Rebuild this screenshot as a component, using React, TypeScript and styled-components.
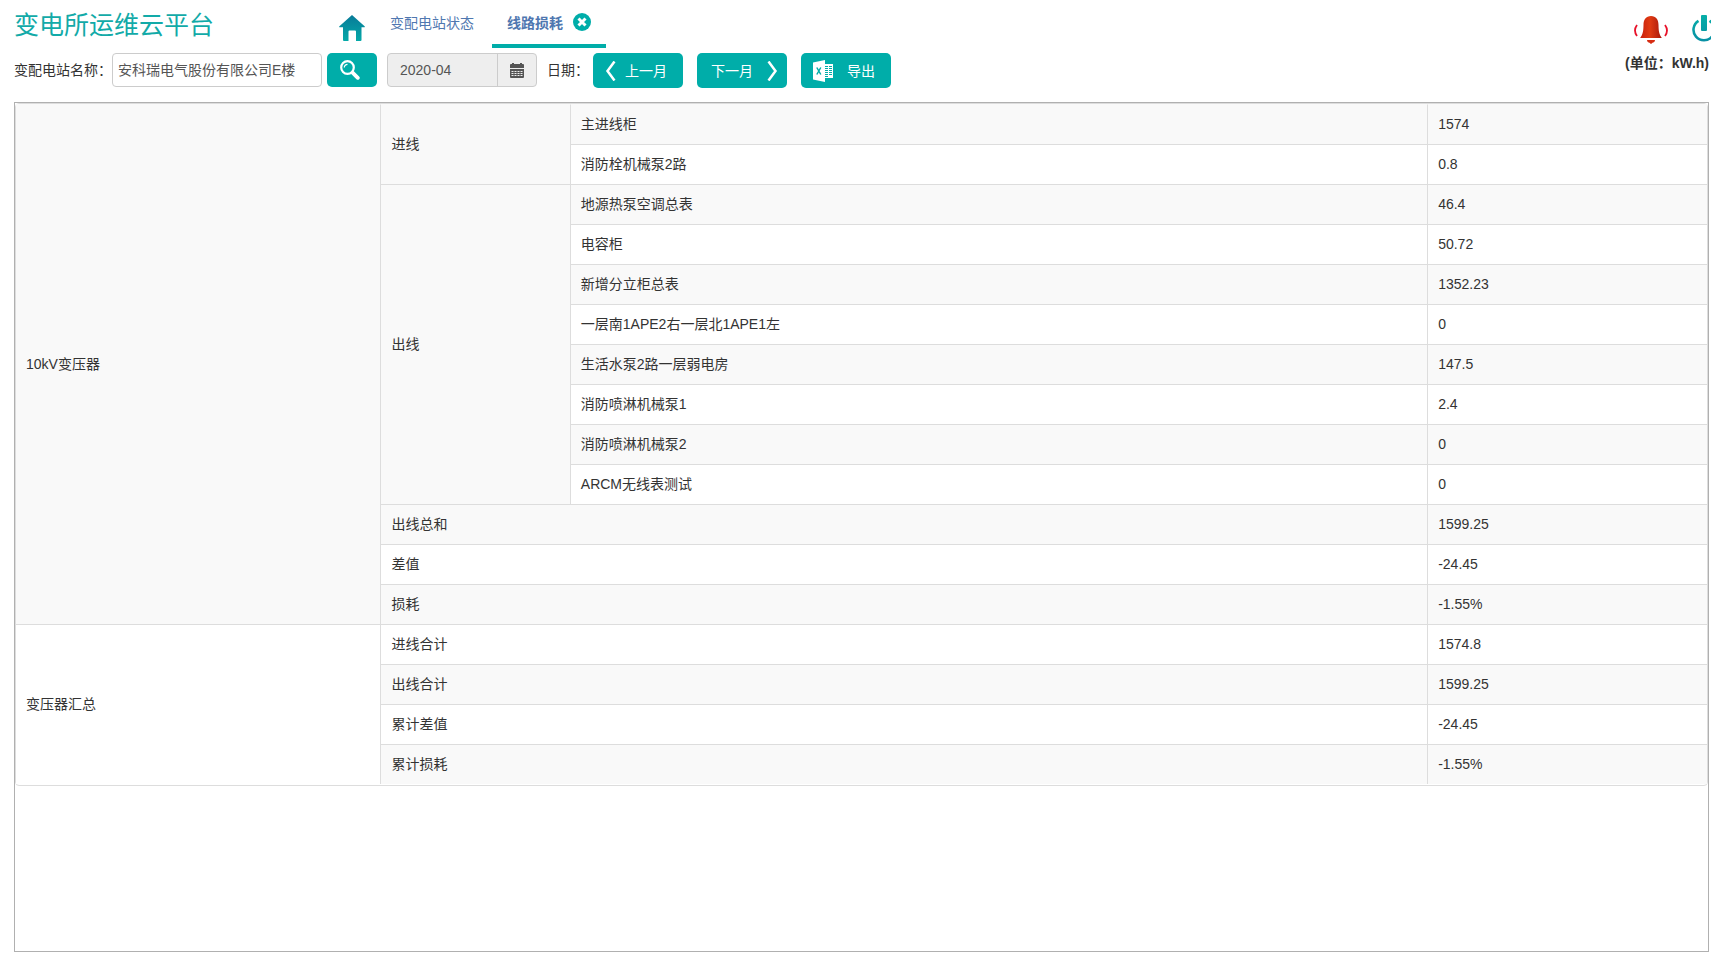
import React from "react";
import styled, { createGlobalStyle } from "styled-components";

const teal = "#00ada9";

const GlobalStyle = createGlobalStyle`
  *, *::before, *::after { box-sizing: border-box; }
  html, body, #root { height: 100%; }
  body {
    margin: 0;
    overflow: hidden;
    background: #fff;
    color: #333;
    font: 14px/20px "Liberation Sans", "Noto Sans CJK SC", sans-serif;
  }
  button, input { font: inherit; color: inherit; }
`;

const Page = styled.div`
  display: flex;
  flex-direction: column;
  height: 100vh;
  padding: 0 2px 2px 14px;
`;

const Header = styled.header`
  display: flex;
  height: 48px;
  flex: none;
`;

const Title = styled.h1`
  width: 325px;
  margin: 0;
  padding-top: 6px;
  color: #12aaa8;
  font-size: 25px;
  font-weight: 400;
  line-height: 38px;
`;

const HomeLink = styled.a`
  display: block;
  width: 36px;
  padding-top: 15px;
  svg { display: block; }
`;

const Tabs = styled.nav`
  display: flex;
  flex: 1;
`;

const Tab = styled.div<{ $active?: boolean }>`
  display: flex;
  align-items: flex-start;
  gap: 10px;
  padding: 13px 15px 0;
  height: 48px;
  font-weight: ${(p) => (p.$active ? 700 : 400)};
  border-bottom: 4px solid ${(p) => (p.$active ? teal : "transparent")};
  margin-right: 3px;
`;

const TabLink = styled.a`
  color: #4f77b0;
  text-decoration: none;
`;

const IconButton = styled.button`
  display: block;
  flex: none;
  padding: 0;
  border: 0;
  background: none;
  line-height: 0;
  cursor: pointer;
`;

const Actions = styled.div`
  display: flex;
  align-items: flex-start;
  gap: 22px;
  padding-top: 14px;
  margin-right: -8px;
`;

const Toolbar = styled.form`
  display: flex;
  flex: none;
  height: 54px;
  padding-top: 5px;
  align-items: flex-start;
`;

const Label = styled.label<{ $width: number }>`
  width: ${(p) => p.$width}px;
  line-height: 34px;
  white-space: nowrap;
`;

const StationInput = styled.input`
  width: 210px;
  height: 34px;
  padding: 0 5px 2px;
  color: #555;
  border: 1px solid #ccc;
  border-radius: 4px;
`;

const Button = styled.button<{ $width: number; $gap?: number; $pad?: number }>`
  display: flex;
  align-items: center;
  gap: ${(p) => p.$gap ?? 0}px;
  width: ${(p) => p.$width}px;
  height: 35px;
  padding: 0 0 0 ${(p) => p.$pad ?? 12}px;
  color: #fff;
  white-space: nowrap;
  background: ${teal};
  border: 0;
  border-radius: 5px;
  cursor: pointer;
  svg { flex: none; }
`;

const SearchButton = styled(Button)`
  height: 34px;
  margin: 0 10px 0 5px;
`;

const DateGroup = styled.div`
  display: flex;
  width: 150px;
  height: 34px;
  margin-right: 10px;
  background: #eee;
  border: 1px solid #ccc;
  border-radius: 4px;
  overflow: hidden;
`;

const DateInput = styled.input`
  flex: 1;
  min-width: 0;
  padding: 0 12px;
  color: #555;
  background: none;
  border: 0;
`;

const CalendarButton = styled(IconButton)`
  display: grid;
  place-items: center;
  width: 39px;
  border-left: 1px solid #ccc;
`;

const ButtonGroup = styled.div`
  display: flex;
  gap: 14px;
`;

const Unit = styled.strong`
  margin-left: auto;
`;

const Panel = styled.main`
  flex: 1;
  min-height: 0;
  border: 1px solid #b0b0b0;
`;

const Table = styled.table`
  width: 100%;
  padding-bottom: 1px;
  table-layout: fixed;
  border-collapse: separate;
  border-spacing: 0;
  border: 1px solid #ddd;
  border-radius: 4px;
`;

const Row = styled.tr<{ $striped: boolean }>`
  background: ${(p) => (p.$striped ? "#f9f9f9" : "#fff")};
`;

const Cell = styled.td<{ $first?: boolean }>`
  height: 40px;
  padding: 0 10px 1px;
  border-left: ${(p) => (p.$first ? "0" : "1px solid #ddd")};
  border-top: 1px solid #ddd;
  tr:first-child > & { border-top-color: transparent; }
`;

const NameCol = styled.col`
  width: 21.55%;
`;

const DirectionCol = styled.col`
  width: 11.2%;
`;

const ValueCol = styled.col`
  width: 16.55%;
`;

type CellData = { text: string; rows?: number; cols?: number; first?: boolean };

const rows: CellData[][] = [
  [
    { text: "10kV变压器", rows: 13, first: true },
    { text: "进线", rows: 2 },
    { text: "主进线柜" },
    { text: "1574" },
  ],
  [{ text: "消防栓机械泵2路" }, { text: "0.8" }],
  [{ text: "出线", rows: 8 }, { text: "地源热泵空调总表" }, { text: "46.4" }],
  [{ text: "电容柜" }, { text: "50.72" }],
  [{ text: "新增分立柜总表" }, { text: "1352.23" }],
  [{ text: "一层南1APE2右一层北1APE1左" }, { text: "0" }],
  [{ text: "生活水泵2路一层弱电房" }, { text: "147.5" }],
  [{ text: "消防喷淋机械泵1" }, { text: "2.4" }],
  [{ text: "消防喷淋机械泵2" }, { text: "0" }],
  [{ text: "ARCM无线表测试" }, { text: "0" }],
  [{ text: "出线总和", cols: 2 }, { text: "1599.25" }],
  [{ text: "差值", cols: 2 }, { text: "-24.45" }],
  [{ text: "损耗", cols: 2 }, { text: "-1.55%" }],
  [
    { text: "变压器汇总", rows: 4, first: true },
    { text: "进线合计", cols: 2 },
    { text: "1574.8" },
  ],
  [{ text: "出线合计", cols: 2 }, { text: "1599.25" }],
  [{ text: "累计差值", cols: 2 }, { text: "-24.45" }],
  [{ text: "累计损耗", cols: 2 }, { text: "-1.55%" }],
];

const HomeIcon = () => (
  <svg width="26" height="26" viewBox="0 0 26 26" aria-hidden="true">
    <defs>
      <linearGradient id="home" x1="0" y1="0" x2="0" y2="1">
        <stop offset="0" stopColor="#087a98" />
        <stop offset="1" stopColor="#04a9a8" />
      </linearGradient>
    </defs>
    <path
      fill="url(#home)"
      d="M13 0 25.600 11.200c.5.5.2 1.100-.4 1.100H22.500V25q0 1-1 1H17v-9.500q0-1-1-1h-5.500q-1 0-1 1V26H5q-1 0-1-1V12.300H.8c-.6 0-.9-.6-.4-1.100z"
    />
  </svg>
);

const CloseIcon = () => (
  <svg width="18" height="18" viewBox="0 0 18 18" aria-hidden="true">
    <circle cx="9" cy="9" r="9" fill={teal} />
    <path d="m5.500 5.500 7 7m0-7-7 7" stroke="#fff" strokeWidth="3" />
  </svg>
);

const BellIcon = () => (
  <svg width="36" height="30" viewBox="0 0 36 30" aria-hidden="true">
    <defs>
      <linearGradient id="bell" x1="0" y1="0" x2="1" y2="0">
        <stop offset="0" stopColor="#c8200c" />
        <stop offset=".45" stopColor="#e03a12" />
        <stop offset="1" stopColor="#a8190c" />
      </linearGradient>
    </defs>
    <path fill="url(#bell)" d="M18 2c5 0 7.500 3.500 7.500 9 .1 6 .6 9 3.300 13H7.200c2.700-4 3.200-7 3.300-13C10.500 5.500 13 2 18 2z" />
    <path fill="#d62c12" d="M14 26h8c0 2-1.500 2.500-2.500 2.800L18 30l-1.500-1.200C15.500 28.500 14 28 14 26z" />
    <path d="M4 11q-4 5.500 0 11M32 11q4 5.500 0 11" fill="none" stroke="#e8122a" strokeWidth="1.800" />
  </svg>
);

const PowerIcon = () => (
  <svg width="26" height="28" viewBox="0 0 26 28" aria-hidden="true">
    <defs>
      <linearGradient id="power" x1="0" y1="0" x2="0" y2="28" gradientUnits="userSpaceOnUse">
        <stop offset="0" stopColor="#06b0a8" />
        <stop offset="1" stopColor="#088fa4" />
      </linearGradient>
    </defs>
    <path
      d="M7.500 6.800A10.500 10.500 0 1 0 18.500 6.800"
      fill="none"
      stroke="url(#power)"
      strokeWidth="2.600"
    />
    <rect x="10" y="1" width="6" height="16" rx="1" fill="url(#power)" />
  </svg>
);

const SearchIcon = () => (
  <svg width="24" height="20" viewBox="-1 0 24 20" fill="none" stroke="#fff" aria-hidden="true">
    <circle cx="7.500" cy="7.500" r="6.300" strokeWidth="2.200" />
    <path d="M4.300 7.500a3.200 3.200 0 0 1 3.200-3.200" strokeWidth="1.200" />
    <path d="m12.800 12.800 5 5" strokeWidth="3.800" strokeLinecap="round" />
  </svg>
);

const CalendarIcon = () => (
  <svg width="14" height="15" viewBox="0 0 14 15" aria-hidden="true">
    <path
      fill="#555"
      d="M0 2q0-1 1-1h1V0h2v1h6V0h2v1h1q1 0 1 1v3H0zM0 6h14v8q0 1-1 1H1q-1 0-1-1z"
    />
    <path
      fill="none"
      stroke="#eee"
      strokeDasharray="2 1"
      d="M1.500 8.500h11M1.500 10.500h11M1.500 12.500h11"
    />
  </svg>
);

const Chevron = ({ next }: { next?: boolean }) => (
  <svg width="11" height="20" viewBox="0 0 11 20" aria-hidden="true">
    <path d={next ? "m1.500.5 7 9.500-7 9.500" : "m9.500.5-7 9.500 7 9.500"} fill="none" stroke="#fff" strokeWidth="2.500" />
  </svg>
);

const ExcelIcon = () => (
  <svg width="20" height="22" viewBox="0 0 20 22" aria-hidden="true">
    <path fill="#fff" d="M0 2.500 12 0v22L0 19.500z" />
    <path fill="none" stroke={teal} strokeWidth="1.500" d="m3.800 7.500 4 7m0-7-4 7" />
    <path fill="#fff" d="M12 4h8v14h-8z" />
    <path fill="none" stroke={teal} strokeWidth="1" d="M12 6.500h3m1 0h3M12 8.500h3m1 0h3M12 10.500h3m1 0h3M12 12.500h3m1 0h3M12 14.500h3m1 0h3M12 16.500h3" />
  </svg>
);

export default function App() {
  return (
    <Page>
      <GlobalStyle />
      <Header>
        <Title>变电所运维云平台</Title>
        <HomeLink href="#home" aria-label="首页">
          <HomeIcon />
        </HomeLink>
        <Tabs>
          <Tab>
            <TabLink href="#status">变配电站状态</TabLink>
          </Tab>
          <Tab $active>
            <TabLink href="#loss">线路损耗</TabLink>
            <IconButton type="button" aria-label="关闭">
              <CloseIcon />
            </IconButton>
          </Tab>
        </Tabs>
        <Actions>
          <IconButton type="button" aria-label="报警">
            <BellIcon />
          </IconButton>
          <IconButton type="button" aria-label="退出">
            <PowerIcon />
          </IconButton>
        </Actions>
      </Header>
      <Toolbar onSubmit={(e) => e.preventDefault()}>
        <Label $width={98} htmlFor="station">变配电站名称：</Label>
        <StationInput id="station" defaultValue="安科瑞电气股份有限公司E楼" />
        <SearchButton $width={50} aria-label="搜索">
          <SearchIcon />
        </SearchButton>
        <DateGroup>
          <DateInput id="month" defaultValue="2020-04" readOnly />
          <CalendarButton type="button" aria-label="选择月份">
            <CalendarIcon />
          </CalendarButton>
        </DateGroup>
        <Label $width={46} htmlFor="month">日期：</Label>
        <ButtonGroup>
          <Button type="button" $width={90} $gap={9}>
            <Chevron />
            <span>上一月</span>
          </Button>
          <Button type="button" $width={90} $gap={14} $pad={14}>
            <span>下一月</span>
            <Chevron next />
          </Button>
          <Button type="button" $width={90} $gap={14}>
            <ExcelIcon />
            <span>导出</span>
          </Button>
        </ButtonGroup>
        <Unit>(单位：kW.h)</Unit>
      </Toolbar>
      <Panel>
        <Table>
          <colgroup>
            <NameCol />
            <DirectionCol />
            <col />
            <ValueCol />
          </colgroup>
          <tbody>
            {rows.map((cells, i) => (
              <Row key={i} $striped={i % 2 === 0}>
                {cells.map((c, j) => (
                  <Cell key={j} rowSpan={c.rows} colSpan={c.cols} $first={c.first}>
                    {c.text}
                  </Cell>
                ))}
              </Row>
            ))}
          </tbody>
        </Table>
      </Panel>
    </Page>
  );
}
